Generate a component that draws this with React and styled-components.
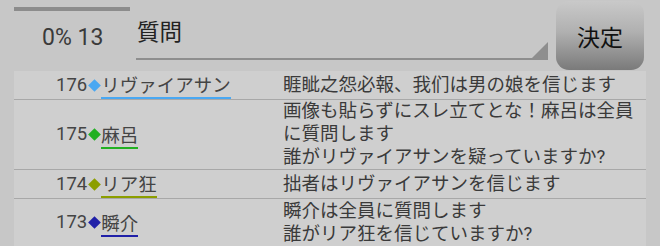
import React from 'react';
import styled, { createGlobalStyle } from 'styled-components';

const GlobalStyle = createGlobalStyle`
  html, body {
    margin: 0;
    padding: 0;
    background: #c7c7c7;
  }
  body {
    width: 660px;
    height: 246px;
    overflow: hidden;
    font-family: Roboto, "Noto Sans CJK JP", sans-serif;
  }
`;

const Page = styled.div`
  display: flex;
  flex-direction: column;
  width: 660px;
  height: 246px;
`;

const Header = styled.div`
  display: flex;
  height: 72px;
  padding: 0 16px 0 14px;
  box-sizing: border-box;
`;

const Status = styled.div`
  width: 122px;
  display: flex;
  flex-direction: column;
`;

const Progress = styled.div`
  width: 116px;
  height: 4px;
  margin-top: 7px;
  background: #8c8c8c;
`;

const Count = styled.div`
  margin-top: 13px;
  padding-left: 28px;
  font-size: 23px;
  line-height: 27px;
  color: #3a3a3a;
`;

const Field = styled.div`
  flex: 1;
  position: relative;
  height: 60px;
  border-bottom: 2px solid #8e8e8e;
  padding-left: 1px;
  font-size: 22.5px;
  line-height: 26px;
  color: #222;
  padding-top: 19px;
  box-sizing: border-box;

  &::after {
    content: '';
    position: absolute;
    right: 0;
    bottom: 0;
    border-style: solid;
    border-width: 0 0 16px 16px;
    border-color: transparent transparent #8e8e8e transparent;
  }
`;

const Submit = styled.button`
  width: 88px;
  height: 69px;
  margin: 1px 0 0 8px;
  border: none;
  border-radius: 13px;
  background: linear-gradient(#c9c9c9 0%, #b0b0b0 45%, #7a7a7a 100%);
  font-family: "Noto Sans CJK JP", sans-serif;
  font-size: 23px;
  color: #111;
  padding: 0;
`;

const List = styled.div`
  margin: 1px 14px 0;
  background: #cfcfcf;
`;

const Row = styled.div`
  display: grid;
  grid-template-columns: 269px 1fr;
  border-bottom: 1px solid #a8a8a8;
  min-height: ${p => p.$h}px;
  box-sizing: border-box;
`;

const Author = styled.div`
  display: flex;
  align-items: center;
  padding-left: 42px;
  font-size: 18.5px;
  color: #444;
`;

const Num = styled.span`
  line-height: 23px;
`;

const Diamond = styled.span`
  width: 9px;
  height: 9px;
  margin: 0 2px 0 3px;
  background: ${p => p.$color};
  transform: rotate(45deg);
`;

const Name = styled.span`
  line-height: 22px;
  border-bottom: 2px solid ${p => p.$color};
  margin-top: 4px;
`;

const Message = styled.div`
  font-size: 18.5px;
  line-height: 23px;
  color: #3a3a3a;
  align-self: center;
  padding-right: 8px;
  white-space: pre-line;
`;

const posts = [
  { no: 176, name: 'リヴァイアサン', color: '#4aa8f2', h: 26, text: '睚眦之怨必報、我们は男の娘を信じます' },
  { no: 175, name: '麻呂', color: '#22b022', h: 70, text: '画像も貼らずにスレ立てとな！麻呂は全員に質問します\n誰がリヴァイアサンを疑っていますか?' },
  { no: 174, name: 'リア狂', color: '#8c9e00', h: 27, text: '拙者はリヴァイアサンを信じます' },
  { no: 173, name: '瞬介', color: '#2020a8', h: 48, text: '瞬介は全員に質問します\n誰がリア狂を信じていますか?' },
];

const App = () => (
  <Page>
    <GlobalStyle />
    <Header>
      <Status>
        <Progress />
        <Count>0% 13</Count>
      </Status>
      <Field>質問</Field>
      <Submit>決定</Submit>
    </Header>
    <List>
      {posts.map(p => (
        <Row key={p.no} $h={p.h}>
          <Author>
            <Num>{p.no}</Num>
            <Diamond $color={p.color} />
            <Name $color={p.color}>{p.name}</Name>
          </Author>
          <Message>{p.text}</Message>
        </Row>
      ))}
    </List>
  </Page>
);

export default App;
